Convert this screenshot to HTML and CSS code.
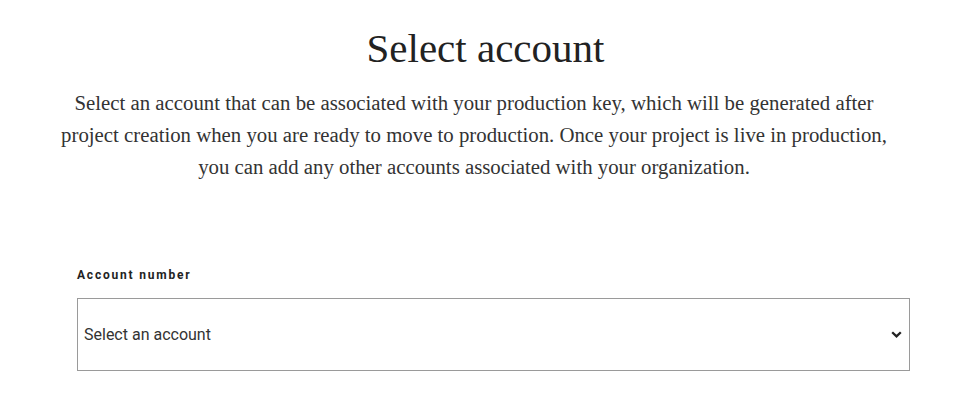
FILE: index.html
```html
<!DOCTYPE html>
<html>
<head>
<meta charset="utf-8">
<link rel="stylesheet" href="styles.css">
</head>
<body>
<main class="page">
  <header class="intro">
    <h1 class="title">Select account</h1>
    <p class="lead">Select an account that can be associated with your production key, which will be generated after project creation when you are ready to move to production. Once your project is live in production, you can add any other accounts associated with your organization.</p>
  </header>
  <section class="field">
    <label class="label" for="acct">Account number</label>
    <div class="select">
      <span class="select-text">Select an account</span>
      <svg class="chev" width="11" height="7" viewBox="0 0 11 7"><path d="M1.2 1.2 L5.5 5.4 L9.8 1.2" fill="none" stroke="#222" stroke-width="2.3"/></svg>
    </div>
  </section>
</main>
</body>
</html>
```
FILE: styles.css
```css
html, body { margin: 0; padding: 0; background: #fff; }
.page { width: 975px; padding-top: 24px; }
.intro { text-align: center; }
.title {
  font-family: "Liberation Serif", "Times New Roman", serif;
  font-weight: normal;
  font-size: 41px;
  line-height: 48px;
  margin: 0;
  padding-right: 4px;
  color: #222;
}
.lead {
  font-family: "Liberation Serif", "Times New Roman", serif;
  font-size: 20.8px;
  line-height: 32px;
  color: #333;
  margin: 15px 0 0 0;
  padding: 0 76px 0 49px;
}
.field { padding: 84px 65px 0 77px; }
.label {
  display: block;
  font-family: Roboto, "Liberation Sans", sans-serif;
  font-weight: bold;
  font-size: 12px;
  line-height: 16px;
  letter-spacing: 1.8px;
  color: #222;
  margin-bottom: 15px;
}
.select {
  height: 71px;
  border: 1px solid #9a9a9a;
  display: flex;
  align-items: center;
  justify-content: space-between;
  padding: 0 7px 0 6px;
}
.select-text {
  font-family: Roboto, "Liberation Sans", sans-serif;
  font-size: 16px;
  color: #333;
}
.chev { display: block; }
```
